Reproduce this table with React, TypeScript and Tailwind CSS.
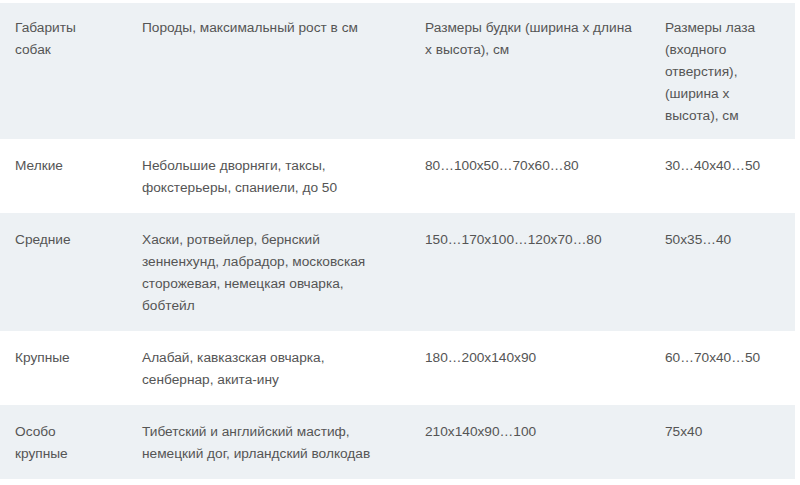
import React from "react";

const rows: { cells: string[]; grey: boolean; pad: string }[] = [
  {
    cells: [
      "Габариты собак",
      "Породы, максимальный рост в см",
      "Размеры будки (ширина х длина х высота), см",
      "Размеры лаза (входного отверстия), (ширина х высота), см",
    ],
    grey: true,
    pad: "pt-[14px] pb-[12px]",
  },
  {
    cells: ["Мелкие", "Небольшие дворняги, таксы, фокстерьеры, спаниели, до 50", "80…100х50…70х60…80", "30…40х40…50"],
    grey: false,
    pad: "pt-[16px] pb-[14px]",
  },
  {
    cells: [
      "Средние",
      "Хаски, ротвейлер, бернский зенненхунд, лабрадор, московская сторожевая, немецкая овчарка, бобтейл",
      "150…170х100…120х70…80",
      "50х35…40",
    ],
    grey: true,
    pad: "pt-[16px] pb-[14px]",
  },
  {
    cells: ["Крупные", "Алабай, кавказская овчарка, сенбернар, акита-ину", "180…200х140х90", "60…70х40…50"],
    grey: false,
    pad: "pt-[16px] pb-[14px]",
  },
  {
    cells: ["Особо крупные", "Тибетский и английский мастиф, немецкий дог, ирландский волкодав", "210х140х90…100", "75х40"],
    grey: true,
    pad: "pt-[16px] pb-[14px]",
  },
];

const cellCls = ["pl-[15px] pr-[22px]", "pl-[15px] pr-[28px]", "pl-[15px] pr-[13px]", "pl-[15px] pr-[15px]"];

export default function App() {
  return (
    <div
      className="w-[800px] h-[485px] bg-white pt-[3px] overflow-hidden"
      style={{ fontFamily: '"Liberation Sans", Arial, sans-serif' }}
    >
      <div className="w-[795px] flex flex-col text-[13.7px] leading-[22px] text-[#555]">
        {rows.map((r, i) => (
          <div
            key={i}
            className={`grid grid-cols-[127px_283px_240px_145px] ${r.pad} ${r.grey ? "bg-[#edf1f4]" : "bg-white"}`}
          >
            {r.cells.map((c, j) => (
              <div key={j} className={cellCls[j]}>
                {c}
              </div>
            ))}
          </div>
        ))}
      </div>
    </div>
  );
}
